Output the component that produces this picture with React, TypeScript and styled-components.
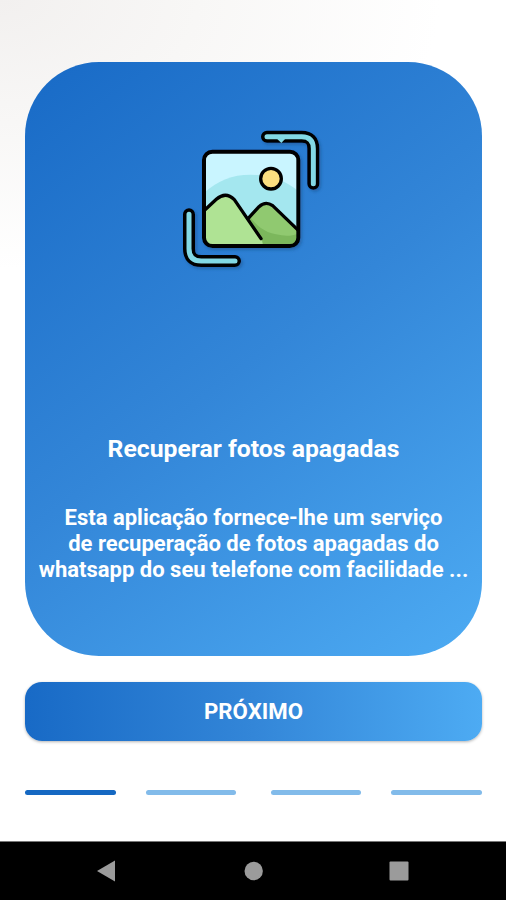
import React from "react";
import styled, { createGlobalStyle } from "styled-components";

const GlobalStyle = createGlobalStyle`
  *, *::before, *::after { box-sizing: border-box; }
  body { margin: 0; background: #fff; }
`;

const Screen = styled.div`
  display: flex;
  flex-direction: column;
  width: 506px;
  height: 900px;
  overflow: hidden;
  font-family: Roboto, "Liberation Sans", sans-serif;
  background: radial-gradient(ellipse 440px 270px at 0 0, #f2f0ef 0%, #f8f7f6 45%, #ffffff 100%) #fff;
`;

const Content = styled.main`
  flex: 1;
  display: flex;
  flex-direction: column;
  padding: 62px 24px 0 25px;
`;

const Card = styled.section`
  display: flex;
  flex-direction: column;
  align-items: center;
  height: 594px;
  border-radius: 74px;
  padding-top: 58px;
  color: #fff;
  background: linear-gradient(142.5deg, #186ac6 0%, #3386d8 50%, #4dabf3 100%);
`;

const Illustration = styled.svg`
  display: block;
  width: 160px;
  height: 160px;
  margin-right: 6px;
  flex: none;
`;

const Title = styled.h1`
  margin: 155px 0 0;
  font-size: 24.75px;
  line-height: 28px;
  font-weight: 700;
  white-space: nowrap;
`;

const Description = styled.p`
  margin: 42px 0 0;
  font-size: 22.02px;
  line-height: 26px;
  font-weight: 700;
  text-align: center;
  white-space: nowrap;
`;

const Line = styled.span`
  display: block;
`;

const NextButton = styled.button`
  height: 59px;
  margin-top: 26px;
  padding: 0 0 1px;
  border: 0;
  border-radius: 17px;
  color: #fff;
  font: 700 22.2px/26px Roboto, "Liberation Sans", sans-serif;
  background: linear-gradient(90deg, #186ac6 0%, #3386d8 50%, #4dabf3 100%);
  box-shadow: 0 1px 3px rgba(0, 0, 0, 0.3);
`;

const Steps = styled.div`
  display: flex;
  justify-content: space-between;
  margin-top: 49px;
`;

const StepPair = styled.div`
  display: flex;
  gap: 30px;
`;

const Step = styled.span<{ $active?: boolean }>`
  width: 90.7px;
  height: 5px;
  border-radius: 2.5px;
  background: ${(p) => (p.$active ? "#1568c2" : "#82bbea")};
`;

const NavBar = styled.nav`
  display: flex;
  align-items: center;
  justify-content: space-between;
  height: 59px;
  padding: 0 95px;
  border-top: 1px solid #777;
  background: #000;
`;

const NavIcon = styled.svg`
  display: block;
  width: 24px;
  height: 24px;
  fill: #9b9b9b;
`;

const PhotoIllustration = () => (
  <Illustration viewBox="0 0 480 480" fill="none" stroke="#000" strokeLinecap="round" strokeLinejoin="round">
    <defs>
      <clipPath id="photo">
        <rect x="99" y="95" width="283" height="283" rx="25" />
      </clipPath>
      <filter id="shade" x="-10%" y="-10%" width="125%" height="125%">
        <feDropShadow dx="5" dy="6" stdDeviation="5" floodColor="#123c70" floodOpacity="0.4" />
      </filter>
    </defs>
    <g filter="url(#shade)">
      <g clipPath="url(#photo)" stroke="none">
        <path d="M95 90h290v292H95z" fill="#c9f5ff" />
        <path d="M95 222C140 182 180 164 239 164S345 180 390 220V390H95z" fill="#a4e7ef" />
        <path d="M230 296L264 260Q283 242 304 257L390 336V390H270z" fill="#90c970" />
        <path d="M237 291C255 315 280 337 315 343C342 349 360 350 390 338V390H275C282 365 260 342 237 306z" fill="#7bb75c" />
        <path d="M92 278L136 238Q164 213 191 240L272 355L278 390H92z" fill="#afe394" />
      </g>
      <path d="M99 272L136 238Q164 213 190 239L270 356" strokeWidth="10" />
      <path d="M231 296L264 260Q284 242 305 257L382 331" strokeWidth="10" />
      <rect x="99" y="95" width="283" height="283" rx="25" strokeWidth="12" />
      <circle cx="300" cy="176" r="31" fill="#fbdf80" strokeWidth="10" />
      <path d="M288 50H392Q427 50 427 86V191" strokeWidth="36" />
      <path d="M288 50H392Q427 50 427 86V191" stroke="#83d9e5" strokeWidth="15" />
      <path d="M318 56H343L331 69z" fill="#83d9e5" stroke="none" />
      <path d="M54 283V386Q54 423 91 423H192" strokeWidth="36" />
      <path d="M54 283V386Q54 423 91 423H192" stroke="#83d9e5" strokeWidth="15" />
    </g>
  </Illustration>
);

export default function App() {
  return (
    <>
      <GlobalStyle />
      <Screen>
        <Content>
          <Card>
            <PhotoIllustration />
            <Title>Recuperar fotos apagadas</Title>
            <Description>
              <Line>Esta aplicação fornece-lhe um serviço</Line>
              <Line>de recuperação de fotos apagadas do</Line>
              <Line>whatsapp do seu telefone com facilidade ...</Line>
            </Description>
          </Card>
          <NextButton>PRÓXIMO</NextButton>
          <Steps>
            <StepPair>
              <Step $active />
              <Step />
            </StepPair>
            <StepPair>
              <Step />
              <Step />
            </StepPair>
          </Steps>
        </Content>
        <NavBar>
          <NavIcon viewBox="0 0 24 24"><path d="M20 1.5V22.5L2 12z" /></NavIcon>
          <NavIcon viewBox="0 0 24 24"><circle cx="12.7" cy="12" r="9.2" /></NavIcon>
          <NavIcon viewBox="0 0 24 24"><rect x="2.5" y="2.5" width="19" height="19" rx="1" /></NavIcon>
        </NavBar>
      </Screen>
    </>
  );
}
